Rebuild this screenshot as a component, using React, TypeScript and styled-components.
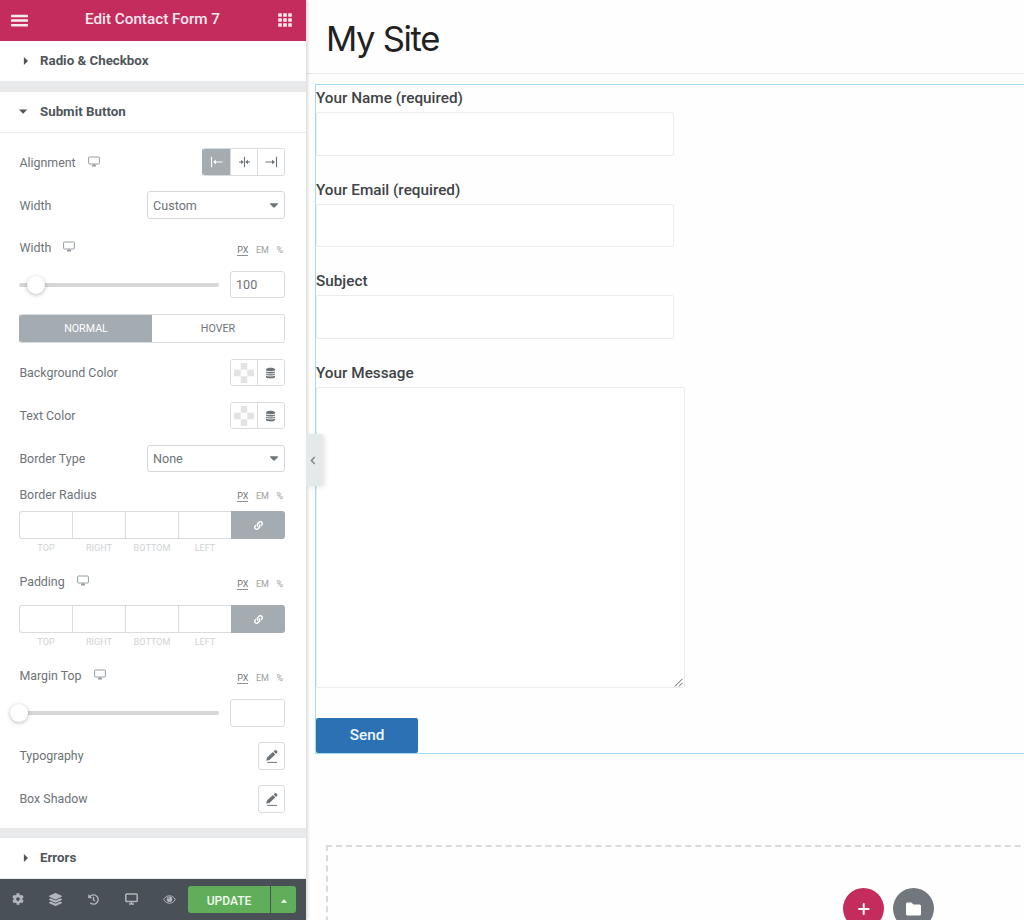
import React from "react";
import styled, { createGlobalStyle } from "styled-components";
import { FaCog, FaLayerGroup, FaHistory, FaLink } from "react-icons/fa";

const GlobalStyle = createGlobalStyle`
  *, *::before, *::after { box-sizing: border-box; }
  html, body { margin: 0; padding: 0; }
  body { font-family: Roboto, "Liberation Sans", sans-serif; background: #fff; overflow: hidden; }
`;

const Editor = styled.div`
  display: flex;
  width: 1024px;
  height: 920px;
  overflow: hidden;
`;

const Panel = styled.aside`
  position: relative;
  z-index: 2;
  display: flex;
  flex-direction: column;
  flex: none;
  width: 306px;
  background: #fff;
  color: #6d7479;
  font-size: 12.4px;
  box-shadow: 1px 0 4px rgba(0, 0, 0, 0.2);
`;

const PanelHeader = styled.header`
  display: flex;
  align-items: center;
  justify-content: space-between;
  height: 41px;
  padding: 0 14px 1px 11px;
  background: #c32c5d;
  color: #fff;
`;

const PanelTitle = styled.h1`
  margin: 0;
  padding: 0 1px 2px 0;
  font-size: 15.25px;
  font-weight: 500;
  color: #fce9f0;
`;

const SectionHeading = styled.h2<{ $open?: boolean; $ruled?: boolean }>`
  display: flex;
  align-items: center;
  flex: none;
  height: ${(p) => (p.$ruled ? 41 : 40)}px;
  margin: 0;
  padding: 0 0 1px ${(p) => (p.$open ? 19 : 23)}px;
  gap: ${(p) => (p.$open ? 13 : 12)}px;
  border-bottom: ${(p) => (p.$ruled ? "1px solid #e9ebec" : "0")};
  color: #4f565b;
  font-size: 13.3px;
  font-weight: 700;
`;

const Divider = styled.div<{ $h: number }>`
  flex: none;
  height: ${(p) => p.$h}px;
  background: #e7e9ea;
`;

const Controls = styled.div`
  flex: none;
  height: 695px;
  padding: 0 21px 0 19px;
`;

const Row = styled.div<{ $top?: number; $h?: number }>`
  display: flex;
  align-items: center;
  justify-content: space-between;
  height: ${(p) => p.$h ?? 28}px;
  margin-top: ${(p) => p.$top ?? 15}px;
`;

const Label = styled.label<{ $raised?: boolean }>`
  display: flex;
  align-items: center;
  gap: 12px;
  padding: 0 0 ${(p) => (p.$raised ? 2 : 0)}px 0.4px;
`;

const Units = styled.div<{ $drop?: number }>`
  display: flex;
  gap: 7.5px;
  padding: ${(p) => (p.$drop ?? 6)}px 2px 0 0;
  font-size: 9px;
  color: #9a9fa3;
`;

const Unit = styled.span<{ $active?: boolean }>`
  line-height: 11px;
  height: 11px;
  color: ${(p) => (p.$active ? "#6d7479" : "inherit")};
  border-bottom: ${(p) => (p.$active ? "1px solid #8b9196" : "0")};
`;

const ButtonGroup = styled.div`
  display: flex;
  height: 100%;
  border: 1px solid #d9dcdf;
  border-radius: 3px;
  overflow: hidden;
`;

const Choice = styled.button<{ $active?: boolean; $w?: number }>`
  display: flex;
  align-items: center;
  justify-content: center;
  width: ${(p) => p.$w ?? 27}px;
  padding: 0;
  border: 0;
  background: ${(p) => (p.$active ? "#a4abb1" : "#fff")};
  color: ${(p) => (p.$active ? "#fff" : "#6d7479")};
  & + & { border-left: 1px solid #d9dcdf; }
`;

const AlignGroup = styled(ButtonGroup)`
  border-left-color: #a4abb1;
`;

const Select = styled.div`
  display: flex;
  align-items: center;
  justify-content: space-between;
  width: 138px;
  height: 100%;
  padding: 0 6px 0 5px;
  border: 1px solid #d5d8dc;
  border-radius: 3px;
  font-size: 12.6px;
`;

const Track = styled.div`
  position: relative;
  width: 200px;
  height: 4px;
  border-radius: 2px;
  background: #d5d6d7;
`;

const Knob = styled.div`
  position: absolute;
  top: -7px;
  width: 18px;
  height: 18px;
  margin-left: -9px;
  border-radius: 50%;
  background: #fff;
  box-shadow: 0 1px 4px rgba(0, 0, 0, 0.28);
`;

const NumberBox = styled.div`
  display: flex;
  align-items: center;
  width: 55px;
  height: 100%;
  padding-left: 5px;
  border: 1px solid #d9dcdf;
  border-radius: 3px;
  font-size: 12.6px;
`;

const Tabs = styled.div`
  display: flex;
  height: 29px;
  margin-top: 16px;
  border: 1px solid #d9dcdf;
  border-left-color: #a4abb1;
  border-radius: 3px;
  overflow: hidden;
`;

const Tab = styled.button<{ $active?: boolean }>`
  flex: 1;
  padding: 0;
  border: 0;
  font: 400 10.7px Roboto, sans-serif;
  background: ${(p) => (p.$active ? "#a4abb1" : "#fff")};
  color: ${(p) => (p.$active ? "#fff" : "#6d7479")};
`;

const Dimensions = styled.div<{ $top: number }>`
  display: grid;
  grid-template-columns: 53px 53px 53px 53px 54px;
  height: 28px;
  margin-top: ${(p) => p.$top}px;
`;

const Side = styled.div`
  border: 1px solid #d9dcdf;
  border-right: 0;
  &:first-child { border-radius: 3px 0 0 3px; }
`;

const LinkSides = styled.button`
  display: flex;
  align-items: center;
  justify-content: center;
  padding: 0;
  border: 0;
  border-radius: 0 3px 3px 0;
  background: #a4abb1;
  color: #fff;
`;

const SideNames = styled.div`
  display: grid;
  grid-template-columns: repeat(4, 53px);
  height: 17px;
  padding-left: 0.5px;
  font-size: 9.1px;
  line-height: 19px;
  text-align: center;
  color: #cfd3d5;
`;

const IconButton = styled.button`
  display: flex;
  align-items: center;
  justify-content: center;
  width: 27px;
  height: 28px;
  padding: 0;
  border: 1px solid #d9dcdf;
  border-radius: 3px;
  background: #fff;
  color: #6d7479;
`;

const Footer = styled.footer`
  display: flex;
  align-items: center;
  flex: none;
  height: 41px;
  padding-right: 10px;
  background: #495056;
  color: #b0b6bb;
`;

const Tools = styled.nav`
  display: grid;
  grid-template-columns: repeat(5, 37.8px);
  flex: none;
  width: 188px;
`;

const Tool = styled.span`
  display: flex;
  align-items: center;
  justify-content: center;
  height: 40px;
  padding: 0 2px 1px 0;
`;

const UpdateButton = styled.button`
  width: 82px;
  height: 27px;
  margin-right: 1px;
  padding: 2px 0 0;
  border: 0;
  border-radius: 3px 0 0 3px;
  background: #61ae5a;
  color: #f3fbf2;
  font: 500 12px Roboto, sans-serif;
`;

const UpdateMenu = styled.button`
  display: flex;
  align-items: center;
  justify-content: center;
  width: 25px;
  height: 27px;
  padding: 2px 0 0;
  border: 0;
  border-radius: 0 3px 3px 0;
  background: #61ae5a;
  color: #fff;
`;

const CollapseHandle = styled.button`
  position: absolute;
  top: 434px;
  left: 306px;
  display: flex;
  align-items: center;
  width: 17px;
  height: 52px;
  padding: 0 0 0 4px;
  border: 0;
  border-radius: 0 3px 3px 0;
  background: #e6e9ea;
  color: #7b8287;
  box-shadow: 2px 1px 5px rgba(0, 0, 0, 0.1);
`;

const Preview = styled.main`
  flex: 1;
  min-width: 0;
  overflow: hidden;
  background: #fefefe;
`;

const SiteHeader = styled.header`
  display: flex;
  align-items: center;
  height: 74px;
  padding: 2px 0 0 20px;
  border-bottom: 1px solid #e9eaea;
`;

const SiteName = styled.h1`
  margin: 0;
  font: 400 34.6px/40px Inter, sans-serif;
  letter-spacing: -1.3px;
  color: #1f2123;
`;

const FormWidget = styled.form`
  width: 760px;
  height: 670px;
  margin: 10px 0 0 9px;
  border: 1px solid #a5daf3;
`;

const Field = styled.div<{ $gap?: number }>`
  margin-bottom: ${(p) => p.$gap ?? 21}px;
`;

const FieldLabel = styled.label`
  display: block;
  height: 27px;
  line-height: 26px;
  font-size: 15.3px;
  font-weight: 500;
  color: #3f4347;
`;

const Box = styled.div<{ $h: number; $w?: number }>`
  display: flex;
  align-items: flex-end;
  justify-content: flex-end;
  width: ${(p) => p.$w ?? 358}px;
  height: ${(p) => p.$h}px;
  border: 1px solid #ebecec;
  border-radius: 2px;
  background: #fff;
`;

const SendButton = styled.button`
  display: block;
  width: 102px;
  height: 35px;
  padding: 0 0 2px;
  border: 0;
  border-radius: 2px;
  background: #2b72b5;
  color: #eff7ff;
  font: 500 15.3px Roboto, sans-serif;
`;

const DropArea = styled.section`
  display: flex;
  gap: 9px;
  width: 1094px;
  height: 200px;
  margin: 91px 0 0 20px;
  padding: 41px 0 0 515px;
  border: 2px dashed #d8dadb;
`;

const RoundButton = styled.button<{ $bg: string }>`
  display: flex;
  align-items: center;
  justify-content: center;
  width: 41px;
  height: 41px;
  padding: 0;
  border: 0;
  border-radius: 50%;
  background: ${(p) => p.$bg};
  color: #fff;
`;

const MenuIcon = () => (
  <svg width="17" height="13" viewBox="0 0 17 13" fill="#fce9f0">
    <rect width="17" height="2.5" rx=".6" y=".8" />
    <rect width="17" height="2.5" rx=".6" y="5.3" />
    <rect width="17" height="2.5" rx=".6" y="9.9" />
  </svg>
);

const AppsIcon = () => (
  <svg width="14" height="14" viewBox="0 0 14 14" fill="#fce9f0">
    {[0, 5, 10].map((y) => [0, 5, 10].map((x) => (
      <rect key={`${x}-${y}`} x={x + 0.2} y={y + 0.2} width="3.6" height="3.6" rx=".5" />
    )))}
  </svg>
);

const CaretRight = () => (
  <svg width="5" height="8" viewBox="0 0 5 8" fill="currentColor"><path d="M.9 0 5 4 .9 8Z" /></svg>
);

const CaretDown = () => (
  <svg width="8" height="5" viewBox="0 0 8 5" fill="currentColor"><path d="M0 .5h8.2L4.1 4.7Z" /></svg>
);

const SelectCaret = () => (
  <svg width="8" height="5" viewBox="0 0 8 5" fill="currentColor"><path d="M0 .3h8v.8L4.6 4.6H3.4L0 1.1Z" /></svg>
);

const ScreenSvg = styled.svg`
  margin-bottom: 1px;
`;

const Desktop = () => (
  <ScreenSvg width="12" height="11" viewBox="0 0 12 11" fill="none" stroke="#989ea3">
    <rect x=".6" y="1" width="10.8" height="7" rx=".7" />
    <path d="M6 8v1.8M4 9.8h4" strokeWidth="1.6" />
  </ScreenSvg>
);

const PreviewScreen = () => (
  <svg width="13" height="12" viewBox="0 0 13 12" fill="none" stroke="currentColor" strokeWidth="1.5">
    <rect x=".8" y="1" width="11.4" height="7.6" rx=".8" />
    <path d="M6.5 8.5v2M4 11h5" />
  </svg>
);

const Eye = () => (
  <svg width="13" height="9" viewBox="0 0 13 9" fill="none" stroke="currentColor">
    <path d="M.7 4.5C3.2-.5 9.8-.5 12.3 4.5 9.8 9.5 3.2 9.5.7 4.5Z" />
    <circle cx="6.5" cy="4.2" r="2.8" fill="currentColor" stroke="none" />
    <path d="M5 4q0-1.3 1.4-1.5" stroke="#495056" strokeWidth=".7" />
  </svg>
);

const AlignStart = () => (
  <svg width="13" height="12" viewBox="0 0 13 12" fill="none" stroke="currentColor" strokeWidth="1.1">
    <path d="M1.5 .8v10.4M4 6h8.5" /><path d="M6 3.7v4.6L3 6Z" fill="currentColor" stroke="none" />
  </svg>
);

const AlignCenter = () => (
  <svg width="13" height="12" viewBox="0 0 13 12" fill="none" stroke="currentColor" strokeWidth="1.1">
    <path d="M6.5 .8v10.4M1 6h3M9 6h3" /><path d="M3 3.7v4.6L5.7 6ZM10 3.7v4.6L7.3 6Z" fill="currentColor" stroke="none" />
  </svg>
);

const AlignEnd = () => (
  <svg width="13" height="12" viewBox="0 0 13 12" fill="none" stroke="currentColor" strokeWidth="1.1">
    <path d="M11.5 .8v10.4M.5 6h8" /><path d="M7 3.7v4.6L10 6Z" fill="currentColor" stroke="none" />
  </svg>
);

const Checker = () => (
  <svg width="20" height="20" viewBox="0 0 20 20" fill="#e2e3e4">
    <path d="M6.7 0h6.6v6.7H6.7ZM0 6.7h6.7v6.6H0ZM13.3 6.7H20v6.6h-6.7ZM6.7 13.3h6.6V20H6.7Z" />
  </svg>
);

const Database = () => (
  <svg width="10" height="12" viewBox="0 0 10 12" fill="currentColor">
    <path d="M0 2.3C0 .1 9 .1 9 2.3v1C8 4.6 1 4.6 0 3.3Z" />
    <path d="M0 4.2c1.5 1.2 7.5 1.2 9 0v1.2c-1 1.3-8 1.3-9 0ZM0 6.4c1.5 1.2 7.5 1.2 9 0v1.2c-1 1.3-8 1.3-9 0ZM0 8.6c1.5 1.2 7.5 1.2 9 0v1.6c-1 1.6-8 1.6-9 0Z" />
  </svg>
);

const Pencil = () => (
  <svg width="14" height="15" viewBox="0 0 14 15" fill="currentColor">
    <path d="M1.2 11.7 2 8.6 7.9 3.1l2.4 2.5-5.9 5.3ZM8.6 2.4l1.2-1.2q.8-.6 1.5.1l.9.9q.7.8 0 1.5L11 4.9Z" />
    <path d="M2.2 12.9h9.8v1H2.2Z" />
  </svg>
);

const ChevronLeft = () => (
  <svg width="6" height="9" viewBox="0 0 6 9" fill="none" stroke="currentColor" strokeWidth="1.4"><path d="M4.7 1 1.4 4.5 4.7 8" /></svg>
);

const CaretUp = () => (
  <svg width="6" height="4" viewBox="0 0 6 4" fill="currentColor"><path d="M0 3.8 3 .3l3 3.5Z" /></svg>
);

const ResizeGrip = () => (
  <svg width="10" height="9" viewBox="0 0 10 9" stroke="#5f6265" strokeWidth="1"><path d="M.8 8.5 8.5.8M4.8 8.5l3.7-3.7" /></svg>
);

const Plus = () => (
  <svg width="12" height="12" viewBox="0 0 12 12" stroke="#fff" strokeWidth="2" strokeLinecap="round"><path d="M5.7 1v10M1 6h9.6" /></svg>
);

const Folder = () => (
  <svg width="16" height="14" viewBox="0 0 16 14" fill="#fff">
    <path d="M1.5.4h4L7.4 2.6h6.1q1.5 0 1.5 1.5v8q0 1.5-1.5 1.5H1.5Q0 13.6 0 12.1V1.8Q0 .4 1.5.4Z" />
  </svg>
);

const UnitSwitch = ({ drop }: { drop?: number }) => (
  <Units $drop={drop}><Unit $active>PX</Unit><Unit>EM</Unit><Unit>%</Unit></Units>
);

const ColorRow = ({ name }: { name: string }) => (
  <Row $top={16} $h={27}>
    <Label>{name}</Label>
    <ButtonGroup><Choice $w={26}><Checker /></Choice><Choice><Database /></Choice></ButtonGroup>
  </Row>
);

const SidesInput = ({ top }: { top: number }) => (
  <>
    <Dimensions $top={top}>
      <Side /><Side /><Side /><Side />
      <LinkSides><FaLink size={9} /></LinkSides>
    </Dimensions>
    <SideNames><span>TOP</span><span>RIGHT</span><span>BOTTOM</span><span>LEFT</span></SideNames>
  </>
);

const Slider = ({ value, percent, top, height }: { value: string; percent: number; top: number; height?: number }) => (
  <Row $top={top} $h={height}>
    <Track><Knob style={{ left: `${percent}%` }} /></Track>
    <NumberBox>{value}</NumberBox>
  </Row>
);

export default function App() {
  return (
    <>
      <GlobalStyle />
      <Editor>
        <Panel>
          <PanelHeader><MenuIcon /><PanelTitle>Edit Contact Form 7</PanelTitle><AppsIcon /></PanelHeader>
          <SectionHeading><CaretRight />Radio &amp; Checkbox</SectionHeading>
          <Divider $h={11} />
          <SectionHeading $open $ruled><CaretDown />Submit Button</SectionHeading>
          <Controls>
            <Row>
              <Label>Alignment <Desktop /></Label>
              <AlignGroup>
                <Choice $active><AlignStart /></Choice>
                <Choice><AlignCenter /></Choice>
                <Choice><AlignEnd /></Choice>
              </AlignGroup>
            </Row>
            <Row><Label>Width</Label><Select>Custom<SelectCaret /></Select></Row>
            <Row $top={14}><Label>Width <Desktop /></Label><UnitSwitch /></Row>
            <Slider top={10} height={27} value="100" percent={8.5} />
            <Tabs><Tab $active>NORMAL</Tab><Tab>HOVER</Tab></Tabs>
            <ColorRow name="Background Color" />
            <ColorRow name="Text Color" />
            <Row $top={16} $h={27}><Label>Border Type</Label><Select>None<SelectCaret /></Select></Row>
            <Row $top={9}><Label $raised>Border Radius</Label><UnitSwitch drop={3} /></Row>
            <SidesInput top={2} />
            <Row $top={12}><Label $raised>Padding <Desktop /></Label><UnitSwitch drop={5} /></Row>
            <SidesInput top={9} />
            <Row $top={12}><Label $raised>Margin Top <Desktop /></Label><UnitSwitch drop={5} /></Row>
            <Slider top={9} value="" percent={0} />
            <Row><Label $raised>Typography</Label><IconButton><Pencil /></IconButton></Row>
            <Row><Label $raised>Box Shadow</Label><IconButton><Pencil /></IconButton></Row>
          </Controls>
          <Divider $h={10} />
          <SectionHeading $ruled><CaretRight />Errors</SectionHeading>
          <Footer>
            <Tools>
              <Tool><FaCog size={12} /></Tool>
              <Tool><FaLayerGroup size={13} /></Tool>
              <Tool><FaHistory size={11} /></Tool>
              <Tool><PreviewScreen /></Tool>
              <Tool><Eye /></Tool>
            </Tools>
            <UpdateButton>UPDATE</UpdateButton>
            <UpdateMenu><CaretUp /></UpdateMenu>
          </Footer>
          <CollapseHandle><ChevronLeft /></CollapseHandle>
        </Panel>
        <Preview>
          <SiteHeader><SiteName>My Site</SiteName></SiteHeader>
          <FormWidget>
            <Field><FieldLabel>Your Name (required)</FieldLabel><Box $h={44} /></Field>
            <Field><FieldLabel>Your Email (required)</FieldLabel><Box $h={43} /></Field>
            <Field><FieldLabel>Subject</FieldLabel><Box $h={44} /></Field>
            <Field $gap={30}><FieldLabel>Your Message</FieldLabel><Box $h={301} $w={369}><ResizeGrip /></Box></Field>
            <SendButton type="button">Send</SendButton>
          </FormWidget>
          <DropArea>
            <RoundButton $bg="#c32c5d"><Plus /></RoundButton>
            <RoundButton $bg="#71777c"><Folder /></RoundButton>
          </DropArea>
        </Preview>
      </Editor>
    </>
  );
}
